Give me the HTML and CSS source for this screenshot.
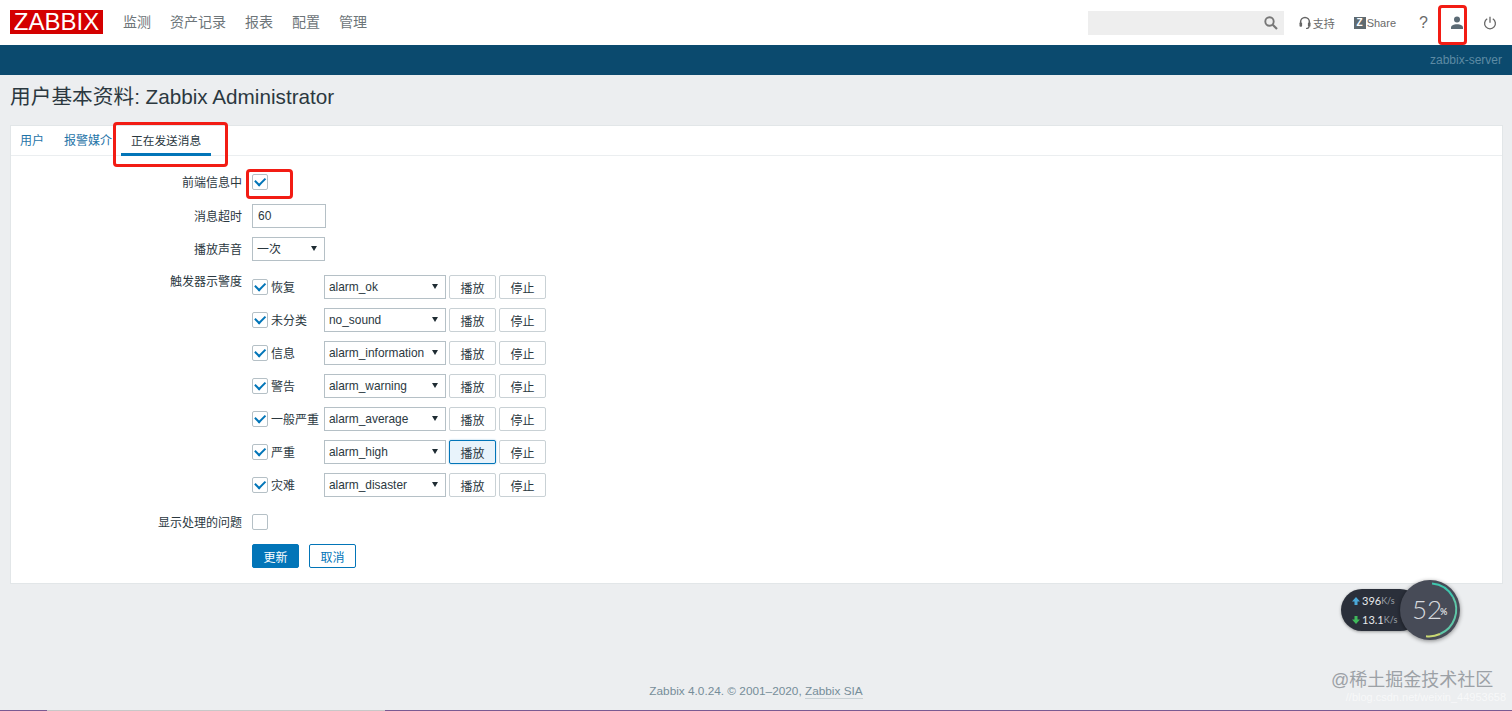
FILE: index.html
```html
<!DOCTYPE html>
<html lang="zh">
<head>
<meta charset="utf-8">
<title>用户基本资料</title>
<link rel="stylesheet" href="styles.css">
</head>
<body>
<header class="topnav">
  <div class="logo">ZABBIX</div>
  <nav class="mainmenu"><a>监测</a><a>资产记录</a><a>报表</a><a>配置</a><a>管理</a></nav>
  <div class="tools">
    <div class="search">
      <svg class="ico" width="16" height="16" viewBox="0 0 16 16"><circle cx="6.5" cy="6.5" r="4.2" fill="none" stroke="#777" stroke-width="1.9"/><path d="M9.7 9.7l4.3 4.3" stroke="#777" stroke-width="2.2"/></svg>
    </div>
    <a class="tool support">
      <svg width="12" height="14" viewBox="0 0 12 14"><path d="M1.6 8V6a4.4 4.4 0 0 1 8.8 0v2" fill="none" stroke="#666" stroke-width="1.5"/><rect x="0.5" y="6.5" width="2.6" height="4.2" rx="1" fill="#666"/><rect x="8.9" y="6.5" width="2.6" height="4.2" rx="1" fill="#666"/><path d="M10 10.5c0 1.4-1.2 2-3 2" fill="none" stroke="#666" stroke-width="1.2"/></svg>
      <span>支持</span>
    </a>
    <a class="tool share"><b class="zbox">Z</b><span>Share</span></a>
    <a class="tool help">?</a>
    <a class="tool user">
      <svg width="14" height="14" viewBox="0 0 14 14"><circle cx="7" cy="3.6" r="3" fill="#5b6a74"/><path d="M1 13v-1.6C1 9.5 3.6 8.2 7 8.2s6 1.3 6 3.2V13z" fill="#5b6a74"/></svg>
    </a>
    <a class="tool power">
      <svg width="14" height="14" viewBox="0 0 14 14"><path d="M4.2 2.8a5.4 5.4 0 1 0 5.6 0" fill="none" stroke="#666" stroke-width="1.3"/><path d="M7 0.8v6" stroke="#666" stroke-width="1.3"/></svg>
    </a>
  </div>
</header>
<div class="subbar"><span>zabbix-server</span></div>
<main class="content">
  <h1 class="title">用户基本资料: Zabbix Administrator</h1>
  <section class="card">
    <div class="tabs">
      <a class="tab">用户</a>
      <a class="tab">报警媒介</a>
      <a class="tab active">正在发送消息</a>
    </div>
    <form class="form">
      <div class="row r-first">
        <label class="lbl">前端信息中</label>
        <span class="check on"></span>
      </div>
      <div class="row">
        <label class="lbl">消息超时</label>
        <div class="input">60</div>
      </div>
      <div class="row">
        <label class="lbl">播放声音</label>
        <div class="select s-short">一次</div>
      </div>
      <div class="row row-top">
        <label class="lbl lbl-top">触发器示警度</label>
        <div class="sevs">
          <div class="sev"><span class="check on"></span><span class="sevname">恢复</span><div class="select">alarm_ok</div><button type="button" class="btn">播放</button><button type="button" class="btn">停止</button></div>
          <div class="sev"><span class="check on"></span><span class="sevname">未分类</span><div class="select">no_sound</div><button type="button" class="btn">播放</button><button type="button" class="btn">停止</button></div>
          <div class="sev"><span class="check on"></span><span class="sevname">信息</span><div class="select">alarm_information</div><button type="button" class="btn">播放</button><button type="button" class="btn">停止</button></div>
          <div class="sev"><span class="check on"></span><span class="sevname">警告</span><div class="select">alarm_warning</div><button type="button" class="btn">播放</button><button type="button" class="btn">停止</button></div>
          <div class="sev"><span class="check on"></span><span class="sevname">一般严重</span><div class="select">alarm_average</div><button type="button" class="btn">播放</button><button type="button" class="btn">停止</button></div>
          <div class="sev"><span class="check on"></span><span class="sevname">严重</span><div class="select">alarm_high</div><button type="button" class="btn focus">播放</button><button type="button" class="btn">停止</button></div>
          <div class="sev"><span class="check on"></span><span class="sevname">灾难</span><div class="select">alarm_disaster</div><button type="button" class="btn">播放</button><button type="button" class="btn">停止</button></div>
        </div>
      </div>
      <div class="row r-ack">
        <label class="lbl">显示处理的问题</label>
        <span class="check"></span>
      </div>
      <div class="row r-actions">
        <span class="lbl"></span>
        <button type="button" class="primary">更新</button>
        <button type="button" class="cancel">取消</button>
      </div>
    </form>
  </section>
</main>
<footer class="footer">Zabbix 4.0.24. © 2001–2020, <a>Zabbix SIA</a></footer>

<div class="mark mark-tab"></div>
<div class="mark mark-check"></div>
<div class="mark mark-user"></div>

<div class="speed">
  <div class="rates">
    <div class="rate"><svg class="arr" width="8" height="8" viewBox="0 0 8 8"><path d="M4 0L8 4.5H5.5V8h-3V4.5H0z" fill="#4aa8d8"/></svg><b>396</b><small>K/s</small></div>
    <div class="rate"><svg class="arr" width="8" height="8" viewBox="0 0 8 8"><path d="M4 8L8 3.5H5.5V0h-3v3.5H0z" fill="#3fb85a"/></svg><b>13.1</b><small>K/s</small></div>
  </div>
  <div class="dial">
    <svg width="60" height="60" viewBox="0 0 60 60"><path d="M32 3.5A26.5 26.5 0 0 1 53 17" fill="none" stroke="#3fc6ae" stroke-width="2"/><path d="M53 17A26.5 26.5 0 0 1 40 54" fill="none" stroke="#5fc7a8" stroke-width="2"/><path d="M40 54A26.5 26.5 0 0 1 26 56.2" fill="none" stroke="#c9d873" stroke-width="2"/></svg>
    <span class="pct">52</span><span class="pcts">%</span>
  </div>
</div>
<div class="wm">@稀土掘金技术社区</div>
<div class="wm2">//blog.csdn.net/weixin_44953658</div>
<div class="bottomline"></div>
</body>
</html>
```
FILE: styles.css
```css
* { box-sizing: border-box; }
html, body { margin: 0; height: 711px; overflow: hidden; }
body {
  position: relative;
  background: #eceef0;
  color: #2b383f;
  font-family: "Liberation Sans", "Noto Sans CJK SC", Arial, sans-serif;
  font-size: 12px;
}
a { color: inherit; text-decoration: none; }

.topnav {
  height: 45px;
  background: #fff;
  display: flex;
  align-items: center;
  padding: 0 10px;
}
.logo {
  width: 93px;
  height: 24px;
  margin-top: -1px;
  background: #d40000;
  color: #fff;
  font-size: 24px;
  line-height: 24px;
  text-align: center;
}
.mainmenu {
  display: flex;
  gap: 19px;
  margin-left: 20px;
  margin-top: -3px;
  font-size: 14px;
  color: #6d7579;
}
.tools { margin-left: auto; display: flex; align-items: center; height: 100%; color: #6a6a6a; }
.search {
  width: 196px;
  height: 24px;
  background: #eeeeee;
  display: flex;
  justify-content: flex-end;
  align-items: center;
  padding-right: 5px;
}
.tool { display: flex; align-items: center; font-size: 11px; }
.support { margin-left: 15px; gap: 2px; width: 38px; }
.share { margin-left: 17px; gap: 1px; }
.zbox {
  display: block;
  width: 12px;
  height: 12px;
  background: #5f6a70;
  color: #fff;
  font: bold 10px/12px "Liberation Sans", sans-serif;
  text-align: center;
}
.help { margin-left: 23px; font-size: 16px; width: 8px; }
.user { margin-left: 23px; }
.power { margin-left: 19px; margin-right: 5px; }

.subbar {
  height: 30px;
  background: #0b4a6e;
  color: #5d8ba4;
  font-size: 12px;
  line-height: 30px;
  text-align: right;
  padding-right: 10px;
}
.content { padding: 0 9px 0 10px; }
.title {
  margin: 0;
  height: 50px;
  padding-top: 8px;
  font-size: 20.7px;
  line-height: 28px;
  font-weight: 400;
  color: #2b383f;
}
.card {
  height: 459px;
  background: #fff;
  border: 1px solid #e2e6e8;
}
.tabs {
  height: 30px;
  border-bottom: 1px solid #ebeef0;
  display: flex;
  padding-left: 9px;
  gap: 20px;
  font-size: 12px;
  color: #1f74a8;
}
.tab { height: 29px; line-height: 30px; }
.tab.active {
  color: #2b383f;
  width: 90px;
  padding-left: 10px;
  margin-left: -11px;
  font-size: 11.7px;
  white-space: nowrap;
  border-bottom: 3px solid #0275b8;
  height: 30px;
}
.form { padding-top: 15px; }
.row {
  display: flex;
  align-items: center;
  min-height: 24px;
  margin-bottom: 9px;
}
.row-top { align-items: flex-start; margin-top: 14px; margin-bottom: 0; }
.lbl {
  width: 231px;
  margin-right: 10px;
  padding-bottom: 2px;
  text-align: right;
  flex: none;
}
.lbl-top { line-height: 14px; padding-bottom: 0; }
.r-first { margin-bottom: 10px; margin-top: -1px; }
.check {
  width: 16px;
  height: 16px;
  border: 1px solid #b5c0c6;
  border-radius: 2px;
  background: #fff;
  display: block;
  position: relative;
  flex: none;
}
.check.on::after {
  content: "";
  box-sizing: border-box;
  position: absolute;
  left: 2px;
  top: 2px;
  width: 10px;
  height: 6.5px;
  border-left: 2.6px solid #0275b8;
  border-bottom: 2.6px solid #0275b8;
  transform: rotate(-45deg);
}
.input {
  width: 74px;
  height: 24px;
  border: 1px solid #b5c0c6;
  padding-left: 5px;
  line-height: 22px;
}
.select {
  position: relative;
  width: 122px;
  height: 24px;
  border: 1px solid #b5c0c6;
  padding-left: 4px;
  line-height: 22px;
  background: #fff;
  flex: none;
  font-size: 11.9px;
}
.select::after {
  content: "";
  position: absolute;
  right: 7px;
  top: 8px;
  border-left: 3px solid transparent;
  border-right: 3px solid transparent;
  border-top: 5px solid #1f2c33;
}
.s-short { width: 73px; line-height: 23px; }
.sevs { display: flex; flex-direction: column; }
.sev { display: flex; align-items: center; height: 24px; margin-bottom: 9px; }
.sevname { width: 56px; padding: 0 0 2px 3px; white-space: nowrap; }
.btn {
  width: 47px;
  height: 24px;
  margin-left: 3px;
  padding: 0;
  border: 1px solid #c9d1d5;
  border-radius: 2px;
  background: #fff;
  font: inherit;
  color: #2b383f;
}
.btn.focus { background: #e8f3fb; border-color: #0275b8; box-shadow: 0 0 2px #8cc1e3; }
.r-ack { margin-top: 4px; margin-bottom: 10px; }
.r-actions { margin-bottom: 0; }
.primary, .cancel {
  width: 47px;
  height: 24px;
  padding: 0;
  border-radius: 2px;
  font: inherit;
}
.primary { background: #0275b8; border: 1px solid #0275b8; color: #fff; }
.cancel { margin-left: 10px; background: #fff; border: 1px solid #0275b8; color: #0275b8; }

.footer {
  position: absolute;
  left: 0;
  right: 0;
  top: 684px;
  text-align: center;
  color: #768d99;
  font-size: 11.8px;
  line-height: 14px;
}
.footer a { border-bottom: 1px solid #c9d1d5; }

.mark { position: absolute; border: 3px solid #f21c14; border-radius: 4px; }
.mark-tab { left: 113px; top: 122px; width: 115px; height: 45px; }
.mark-check { left: 246px; top: 169px; width: 47px; height: 30px; }
.mark-user { left: 1438px; top: 5px; width: 29px; height: 40px; }

.speed { position: absolute; left: 1341px; top: 580px; width: 119px; height: 60px; }
.rates {
  position: absolute;
  left: 0;
  top: 9px;
  width: 80px;
  height: 42px;
  background: #2a2f3a;
  border-radius: 21px;
  box-shadow: 0 1px 3px rgba(0,0,0,.35);
  padding: 2px 0 0 11px;
  font-family: Lato, "Liberation Sans", sans-serif;
}
.rate { display: flex; align-items: center; height: 19px; color: #e6e8ea; }
.rate b { font-weight: 400; font-size: 11px; }
.rate small { font-size: 9px; color: #9aa0a8; }
.arr { flex: none; margin-right: 2px; }
.dial {
  position: absolute;
  left: 59px;
  top: 0;
  width: 60px;
  height: 60px;
  border-radius: 50%;
  background: #474b57;
  box-shadow: 0 1px 4px rgba(0,0,0,.45);
  font-family: Lato, "Liberation Sans", sans-serif;
}
.dial svg { position: absolute; left: 0; top: 0; }
.pct { position: absolute; left: 12px; top: 15px; font-size: 26px; line-height: 28px; font-weight: 300; color: #d8dade; }
.pcts { position: absolute; left: 40px; top: 26px; font-size: 9px; font-weight: 700; line-height: 12px; color: #d8dade; }
.wm { position: absolute; left: 1331px; top: 668px; font-size: 18px; line-height: 24px; color: #9ca1a6; }
.wm2 { position: absolute; left: 1320px; top: 691px; width: 186px; font-size: 11px; line-height: 13px; color: #fff; opacity: .6; white-space: nowrap; overflow: hidden; text-align: right; }
.bottomline {
  position: absolute;
  left: 0;
  right: 0;
  top: 710px;
  height: 1px;
  background: linear-gradient(to right, #7a5a92 47px, #c8c8c8 47px, #c8c8c8 385px, #7a5a92 385px);
}
```
